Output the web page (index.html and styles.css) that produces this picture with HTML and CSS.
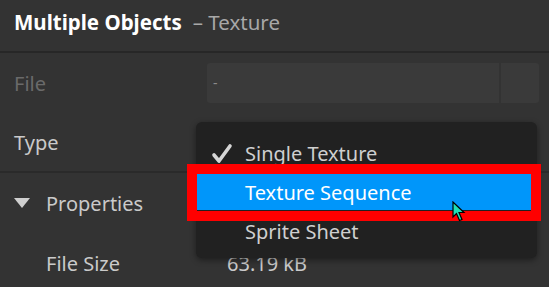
FILE: index.html
```html
<!DOCTYPE html>
<html lang="en">
<head>
    <meta charset="UTF-8">
    <title>Multiple Objects - Texture</title>
    <link rel="stylesheet" href="styles.css">
</head>
<body>
    <div class="panel">
        <div class="header">
            <span class="title">Multiple Objects</span>
            <span class="subtitle">– Texture</span>
        </div>

        <div class="row">
            <span class="label dim">File</span>
            <div class="field">
                <div class="input">-</div>
                <div class="browse"></div>
            </div>
        </div>

        <div class="row sep">
            <span class="label">Type</span>
        </div>

        <div class="row">
            <span class="label group"><span class="caret"></span>Properties</span>
        </div>

        <div class="row">
            <span class="label sub">File Size</span>
            <span class="value">63.19 kB</span>
        </div>

        <div class="menu">
            <div class="item">
                <svg class="check" width="22" height="22" viewBox="0 0 22 22">
                    <polyline points="3,12 8,18 19,3" fill="none" stroke="#d6d6d6" stroke-width="3.6" stroke-linecap="round" stroke-linejoin="round"/>
                </svg>
                Single Texture
            </div>
            <div class="item active">Texture Sequence</div>
            <div class="item last">Sprite Sheet</div>
        </div>

        <div class="mark"></div>

        <svg class="cursor" width="14" height="24" viewBox="0 0 14 24">
            <path d="M1 1 L1 16 L4.5 12.5 L7.5 19.5 L10 18.5 L7 11.5 L12 11.5 Z" fill="#1ee0b4" stroke="#000" stroke-width="1.2" stroke-linejoin="miter"/>
        </svg>
    </div>
</body>
</html>
```

FILE: styles.css
```css
body {
    margin: 0;
    background-color: #333333;
    font-family: "Noto Sans", "Open Sans", sans-serif;
    color: #cfcfcf;
}
.panel {
    position: relative;
    width: 549px;
    height: 287px;
    overflow: hidden;
}
.header {
    height: 53px;
    display: flex;
    align-items: center;
    padding: 0 14px 8px;
    box-sizing: border-box;
    border-bottom: 2px solid #272727;
    gap: 11px;
}
.title {
    font-size: 20.5px;
    font-weight: bold;
    color: #ffffff;
}
.subtitle {
    font-size: 20.5px;
    color: #a8a8a8;
}
.row {
    height: 60px;
    display: flex;
    align-items: center;
    padding-left: 14px;
    box-sizing: border-box;
}
.row.sep {
    border-bottom: 2px solid #2a2a2a;
}
.label {
    width: 193px;
    font-size: 20px;
    color: #cacaca;
}
.label.dim {
    color: #6a6a6a;
}
.label.group {
    display: flex;
    align-items: center;
}
.label.sub {
    padding-left: 32px;
    width: 181px;
}
.caret {
    width: 0;
    height: 0;
    border-left: 8px solid transparent;
    border-right: 8px solid transparent;
    border-top: 10px solid #cfcfcf;
    margin-right: 16px;
}
.field {
    display: flex;
    gap: 2px;
    height: 40px;
}
.input {
    width: 292px;
    background-color: #3a3a3a;
    border-radius: 3px 0 0 3px;
    color: #8a8a8a;
    font-size: 14px;
    line-height: 40px;
    padding-left: 6px;
    box-sizing: border-box;
}
.browse {
    width: 38px;
    background-color: #3a3a3a;
    border-radius: 0 3px 3px 0;
}
.value {
    font-size: 20px;
    color: #cacaca;
}
.menu {
    position: absolute;
    left: 196px;
    top: 122px;
    width: 341px;
    height: 136px;
    box-sizing: border-box;
    padding: 13px 6px 0 1px;
    background-color: #212121;
    border-radius: 6px;
    box-shadow: 0 2px 6px rgba(0, 0, 0, 0.45);
}
.item {
    height: 38px;
    line-height: 38px;
    font-size: 20px;
    color: #cfcfcf;
    padding-left: 48px;
    position: relative;
}
.item.active {
    height: 37px;
    line-height: 39px;
    background-color: #0096fa;
    color: #ffffff;
}
.item.last {
    line-height: 44px;
}
.check {
    position: absolute;
    left: 14px;
    top: 8px;
}
.mark {
    position: absolute;
    left: 187px;
    top: 164px;
    width: 354px;
    height: 57px;
    box-sizing: border-box;
    border: 10px solid #ff0000;
}
.cursor {
    position: absolute;
    left: 452px;
    top: 201px;
}
```
